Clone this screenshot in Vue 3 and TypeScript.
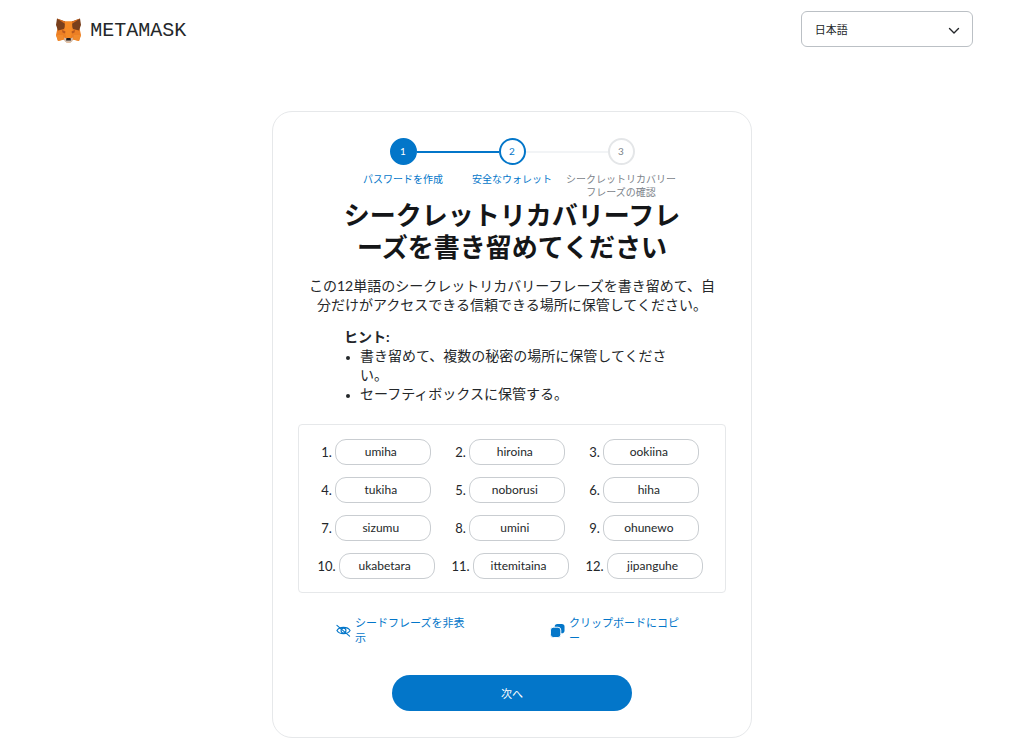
<script setup lang="ts">
import { ref } from 'vue'

interface Step {
  label: string[]
  state: 'done' | 'current' | 'todo'
}

const language = ref('ja')

const steps: Step[] = [
  { label: ['パスワードを作成'], state: 'done' },
  { label: ['安全なウォレット'], state: 'current' },
  { label: ['シークレットリカバリー', 'フレーズの確認'], state: 'todo' },
]

const words: string[] = [
  'umiha', 'hiroina', 'ookiina',
  'tukiha', 'noborusi', 'hiha',
  'sizumu', 'umini', 'ohunewo',
  'ukabetara', 'ittemitaina', 'jipanguhe',
]
</script>

<template>
  <div class="page" lang="ja">
    <header class="header">
      <div class="brand">
        <svg class="fox" viewBox="0 0 54 50" aria-hidden="true">
          <path d="M5 20 L18 7 H36 L49 20 L52 34 L48 46 L36 43 L31 49 H23 L18 43 L6 46 L2 34 Z" fill="#ec7f24" />
          <path d="M4 1 L20 7 L22 14 L18 22 L6 25 L2 14 Z" fill="#793f1c" />
          <path d="M50 1 L34 7 L32 14 L36 22 L48 25 L52 14 Z" fill="#793f1c" />
          <path d="M4 1 L20 7 L22 13 Z M50 1 L34 7 L32 13 Z" fill="#d96e20" />
          <path d="M20 7 H34 L35 27 L31 40 H23 L19 27 Z" fill="#f58a26" />
          <path d="M14 24 L21 27 L20 31 L15 29 Z M40 24 L33 27 L34 31 L39 29 Z" fill="#b9581d" />
          <path d="M2 34 H16 L18 43 L6 46 Z M52 34 H38 L36 43 L48 46 Z" fill="#f08a2c" />
          <path d="M18 39 L23 41 H31 L36 39 L35 46 L31 49 H23 L19 46 Z" fill="#d3bfae" />
          <path d="M23 40 H31 L32 45 H22 Z" fill="#1d1a1c" />
        </svg>
        <span class="wordmark">METAMASK</span>
      </div>
      <div class="language">
        <select v-model="language" aria-label="言語">
          <option value="ja">日本語</option>
          <option value="en">English</option>
        </select>
        <svg class="chevron" viewBox="0 0 12 12" aria-hidden="true">
          <path d="M1.5 3.5 L6 8 L10.5 3.5" fill="none" stroke="#24272a" stroke-width="1.4" stroke-linecap="round" stroke-linejoin="round" />
        </svg>
      </div>
    </header>

    <main class="card">
      <ol class="steps">
        <li v-for="(step, i) in steps" :key="i" class="step" :class="step.state">
          <span class="track"><span class="dot">{{ i + 1 }}</span></span>
          <span class="step-label">
            <span v-for="line in step.label" :key="line">{{ line }}</span>
          </span>
        </li>
      </ol>

      <h1>シークレットリカバリーフレーズを書き留めてください</h1>
      <p class="description">この12単語のシークレットリカバリーフレーズを書き留めて、自分だけがアクセスできる信頼できる場所に保管してください。</p>

      <section class="tips">
        <h2>ヒント:</h2>
        <ul>
          <li>書き留めて、複数の秘密の場所に保管してください。</li>
          <li>セーフティボックスに保管する。</li>
        </ul>
      </section>

      <ol class="phrase">
        <li v-for="(word, i) in words" :key="word">
          <span class="number">{{ i + 1 }}.</span>
          <span class="chip">{{ word }}</span>
        </li>
      </ol>

      <div class="actions">
        <button type="button" class="link">
          <svg viewBox="0 0 16 16" aria-hidden="true">
            <g fill="none" stroke="#0376c9" stroke-width="1.2" stroke-linecap="round">
              <path d="M1 8 C3.5 3.5 12.5 3.5 15 8 C12.5 12.5 3.5 12.5 1 8 Z" />
              <circle cx="8" cy="8" r="2.6" />
              <path d="M1 2.5 L14.5 14" />
            </g>
          </svg>
          <span>シードフレーズを非表示</span>
        </button>
        <button type="button" class="link">
          <svg viewBox="0 0 16 16" aria-hidden="true">
            <rect x="5" y="1" width="10.5" height="10" rx="3" fill="#0376c9" />
            <rect x="0.5" y="4.5" width="11" height="11" rx="3" fill="#0376c9" stroke="#fff" stroke-width="1" />
          </svg>
          <span>クリップボードにコピー</span>
        </button>
      </div>

      <button type="button" class="next">次へ</button>
    </main>
  </div>
</template>

<style>
body {
  margin: 0;
  background: #fff;
}
</style>

<style scoped>
.page,
.page * {
  box-sizing: border-box;
}

.page {
  padding: 11px 5% 7px;
  color: #24272a;
  font-family: Lato, "Noto Sans CJK JP", sans-serif;
  font-size: 14px;
  line-height: 19px;
}

h1,
h2,
p,
ol,
ul {
  margin: 0;
  padding: 0;
}

button,
select {
  font-family: inherit;
  cursor: pointer;
}

.header {
  display: flex;
  align-items: center;
  justify-content: space-between;
}

.brand {
  display: flex;
  align-items: center;
  gap: 8px;
  padding: 2px 0 0 4px;
}

.fox {
  width: 27px;
  height: 25px;
}

.wordmark {
  color: #24272a;
  font-family: "Liberation Mono", monospace;
  font-size: 20px;
}

.language {
  position: relative;
  width: 172px;
}

.language select {
  display: block;
  width: 100%;
  height: 36px;
  padding: 0 32px 0 13px;
  border: 1px solid #bbc0c5;
  border-radius: 6px;
  background: #fff;
  color: #24272a;
  font-size: 11px;
  appearance: none;
}

.chevron {
  position: absolute;
  top: 14px;
  right: 13px;
  width: 12px;
  height: 12px;
  pointer-events: none;
}

.card {
  display: flex;
  flex-direction: column;
  align-items: center;
  max-width: 480px;
  margin: 64px auto 0;
  padding: 26px 25px;
  border: 1px solid #e6e8ea;
  border-radius: 20px;
}

.steps {
  display: grid;
  grid-template-columns: repeat(3, 109px);
  list-style: none;
}

.step {
  display: flex;
  flex-direction: column;
  align-items: center;
  gap: 8px;
  color: #0376c9;
  font-size: 10px;
  line-height: 13px;
}

.track {
  display: flex;
  align-items: center;
  align-self: stretch;
}

.track::before,
.track::after {
  content: "";
  flex: 1;
  height: 2px;
}

.step.done .track::after,
.step.current .track::before {
  background: #0376c9;
}

.step.current .track::after,
.step.todo .track::before {
  background: #f2f4f6;
}

.dot {
  display: flex;
  align-items: center;
  justify-content: center;
  width: 27px;
  height: 27px;
  border: 2px solid #0376c9;
  border-radius: 50%;
}

.done .dot {
  background: #0376c9;
  color: #fff;
}

.step.todo {
  color: #7c838a;
}

.todo .dot {
  border-color: #e4e6e8;
}

.step-label {
  display: flex;
  flex-direction: column;
  align-items: center;
  white-space: nowrap;
}

h1 {
  max-width: 342px;
  color: #141618;
  font-size: 26px;
  font-weight: 700;
  line-height: 32px;
  text-align: center;
  line-break: anywhere;
}

.description {
  max-width: 418px;
  margin-top: 13px;
  text-align: center;
}

.tips {
  width: 100%;
  max-width: 336px;
  margin-top: 13px;
}

h2 {
  font-size: 14px;
  font-weight: 700;
  line-height: 19px;
}

.tips ul {
  padding-left: 16px;
}

.tips li {
  max-width: 320px;
}

.tips li::marker {
  font-size: 11px;
}

.phrase {
  display: grid;
  grid-template-columns: repeat(3, 1fr);
  row-gap: 12px;
  width: 100%;
  margin-top: 21px;
  padding: 14px 12px 13px;
  border: 1px solid #e6e8ea;
  border-radius: 4px;
  list-style: none;
}

.phrase li {
  display: flex;
  align-items: center;
  justify-content: center;
  gap: 3px;
  padding-right: 4px;
}

.number {
  font-size: 13px;
}

.chip {
  width: 96px;
  height: 26px;
  padding-right: 4px;
  border: 1px solid #c9cdd1;
  border-radius: 11px;
  font-size: 12px;
  line-height: 24px;
  text-align: center;
}

.actions {
  display: grid;
  grid-template-columns: 1fr 1fr;
  width: 100%;
  margin-top: 22px;
}

.link {
  display: flex;
  align-items: center;
  gap: 4px;
  padding: 0 40px 0 38px;
  border: 0;
  background: none;
  color: #0376c9;
  font-size: 11px;
  line-height: 15px;
  text-align: left;
  line-break: anywhere;
}

.link svg {
  flex: none;
  width: 15px;
  height: 15px;
}

.next {
  width: 240px;
  height: 36px;
  margin-top: 30px;
  border: 0;
  border-radius: 18px;
  background: #0376c9;
  color: #fff;
  font-size: 11px;
}
</style>
